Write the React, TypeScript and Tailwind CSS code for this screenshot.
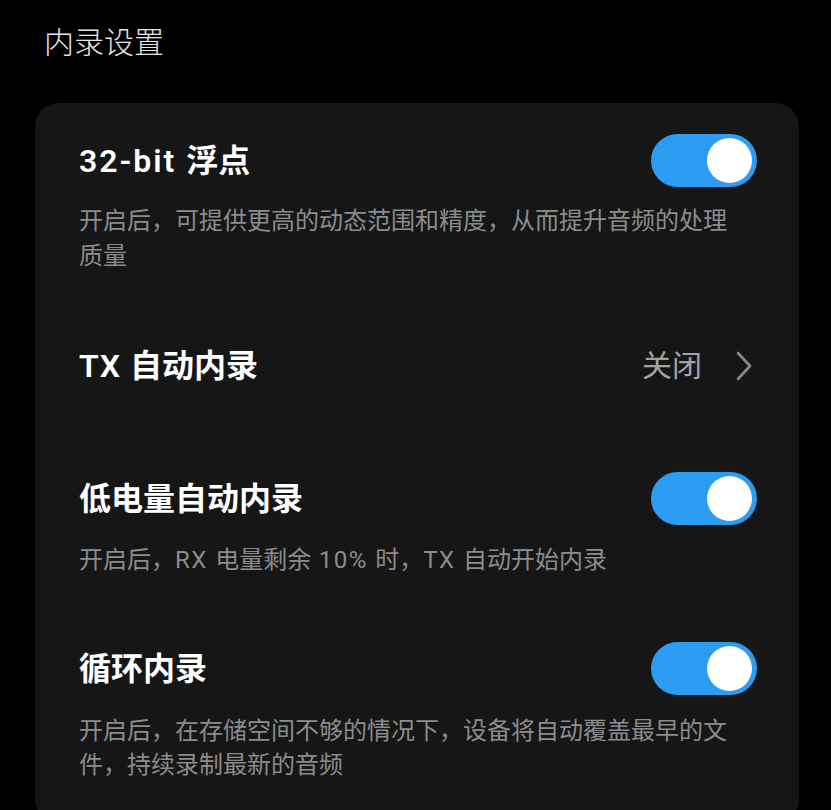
import React from "react";

const font = { fontFamily: 'Roboto, "Noto Sans CJK SC", "Noto Sans", sans-serif' };

// Pill switch, always on in the screenshot
const Toggle: React.FC = () => (
  <div className="flex h-[53px] w-[106px] shrink-0 items-center justify-end rounded-full bg-[#2b9cf2] pr-[5px]">
    <div className="h-[45px] w-[45px] rounded-full bg-white" />
  </div>
);

const Chevron: React.FC = () => (
  <svg width="18" height="30" viewBox="0 0 18 30" fill="none">
    <path d="M3 2 L15 15 L3 28" stroke="#8a8a8a" strokeWidth="2.6" strokeLinecap="round" strokeLinejoin="round" />
  </svg>
);

export default function App() {
  return (
    <div className="min-h-[810px] w-[831px] overflow-hidden bg-black" style={font}>
      <div className="pl-[44px] pt-[22px]">
        <h1 className="text-[30px] font-light leading-[42px] text-[#e6e6e6]">内录设置</h1>
      </div>

      <div className="ml-[35px] mr-[32px] mt-[39px] h-[720px] rounded-[24px] bg-[#161616] pl-[44px] pr-[42px] pt-[31px]">
        {/* 32-bit float */}
        <div className="flex h-[53px] items-center justify-between">
          <span className="text-[32px] font-semibold text-white">
            <span className="tracking-[2px]">32-bit </span>浮点
          </span>
          <Toggle />
        </div>
        <p className="mt-[17px] pr-[20px] text-[24px] leading-[35px] text-[#8c8c8c]">
          开启后，可提供更高的动态范围和精度，从而提升音频的处理质量
        </p>

        {/* TX auto record */}
        <div className="mt-[65px] flex h-[53px] items-center justify-between">
          <span className="text-[32px] font-semibold text-white">
            <span className="tracking-[1px]">TX </span>自动内录
          </span>
          <div className="flex items-center gap-[33px] pr-[4px]">
            <span className="text-[30px] text-[#a3a3a3]">关闭</span>
            <Chevron />
          </div>
        </div>

        {/* low battery */}
        <div className="mt-[80px] flex h-[53px] items-center justify-between">
          <span className="text-[32px] font-semibold text-white">低电量自动内录</span>
          <Toggle />
        </div>
        <p className="mt-[18px] text-[24px] leading-[35px] text-[#8c8c8c]">
          开启后，<span className="tracking-[1.5px]">RX </span>电量剩余
          <span className="tracking-[1.5px]"> 10% </span>时，
          <span className="tracking-[1.5px]">TX </span>自动开始内录
        </p>

        {/* loop record */}
        <div className="mt-[64px] flex h-[53px] items-center justify-between">
          <span className="text-[32px] font-semibold text-white">循环内录</span>
          <Toggle />
        </div>
        <p className="mt-[19px] pr-[20px] text-[24px] leading-[34px] text-[#8c8c8c]">
          开启后，在存储空间不够的情况下，设备将自动覆盖最早的文件，持续录制最新的音频
        </p>
      </div>
    </div>
  );
}
